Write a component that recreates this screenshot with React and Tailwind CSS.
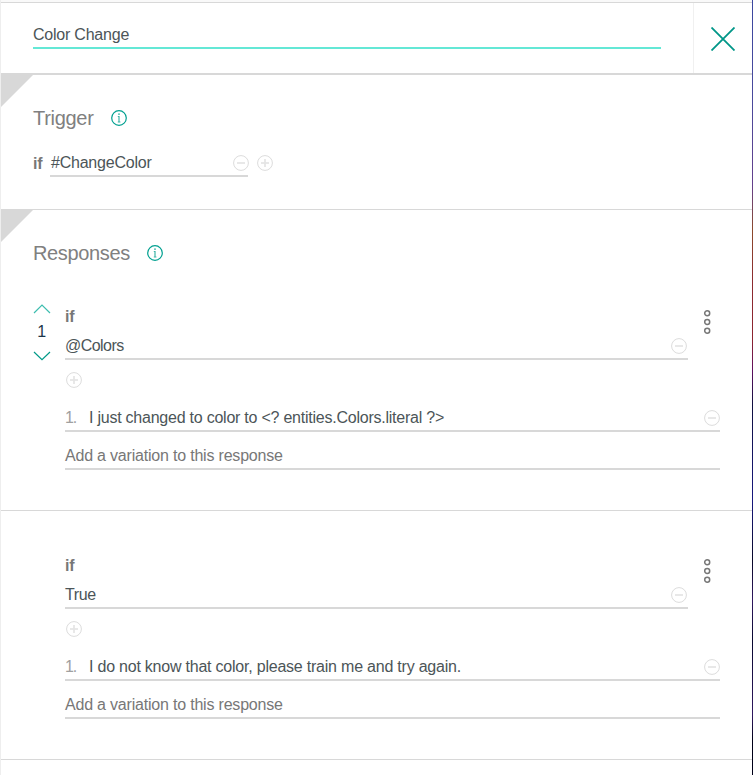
import React from 'react';

function CircleIcon({ plus = false }) {
  return (
    <svg width="16" height="16" viewBox="0 0 16 16" fill="none" className="block shrink-0">
      <circle cx="8" cy="8" r="7.4" stroke="#dcdcdc" />
      <path d="M4 8h8" stroke="#e4e4e4" strokeWidth="1.7" />
      {plus && <path d="M8 4v8" stroke="#e4e4e4" strokeWidth="1.7" />}
    </svg>
  );
}

function InfoIcon() {
  return (
    <svg width="16" height="16" viewBox="0 0 16 16" fill="none" className="block shrink-0">
      <circle cx="8" cy="8" r="7.3" stroke="#00a090" strokeWidth="1.2" />
      <path d="M6.8 6.5H8V12M6.8 12h2.6" stroke="#3fb5a8" strokeWidth="1.2" />
      <rect x="7.2" y="3.4" width="1.6" height="1.5" fill="#3fb5a8" />
    </svg>
  );
}

function MoreIcon() {
  return (
    <svg width="8" height="26" viewBox="0 0 8 26" fill="none" stroke="#777" strokeWidth="1.5" className="block">
      <circle cx="4.2" cy="4.2" r="2.5" />
      <circle cx="4.2" cy="13" r="2.5" />
      <circle cx="4.2" cy="21.8" r="2.5" />
    </svg>
  );
}

function Chevron({ down = false }) {
  return (
    <svg width="18" height="10" viewBox="0 0 18 10" fill="none" className="block">
      <path
        d={down ? 'M1 1L9 8.7L17 1' : 'M1 9L9 1L17 9'}
        stroke={down ? '#009a88' : '#3dbdaf'}
        strokeWidth="1.2"
      />
    </svg>
  );
}

function Corner() {
  return (
    <svg width="33" height="33" viewBox="0 0 33 33" className="absolute left-0 -top-px block">
      <path d="M0 0H33L0 33Z" fill="#d8d8d8" />
    </svg>
  );
}

function Response({ condition, conditionClass, text, textClass, order }) {
  return (
    <div className="flex h-[206px] pl-8">
      <div className="flex w-8 shrink-0 flex-col pt-[1px]">
        {order && (
          <>
            <Chevron />
            <div className="h-[37px] w-[17px] pt-[8px] text-center leading-[20px] text-[#1d3649]">{order}</div>
            <Chevron down />
          </>
        )}
      </div>
      <div className="w-[655px]">
        <div className="flex h-[57px]">
          <div className="w-[623px] border-b-2 border-[#d8d8d8]">
            <div className="h-[29px] pt-[4px] font-bold leading-[20px] text-[#777]">if</div>
            <div className="flex justify-between leading-[20px]">
              <span className={`pt-[4px] ${conditionClass}`}>{condition}</span>
              <span className="pr-px pt-[6px]"><CircleIcon /></span>
            </div>
          </div>
          <div className="pl-[15px] pt-[6px]"><MoreIcon /></div>
        </div>
        <div className="h-[45px] pl-px pt-[12px]"><CircleIcon plus /></div>
        <div className="flex h-[27px] border-b-2 border-[#d8d8d8] leading-[20px]">
          <span className="w-6 pt-[3px] tracking-[-1.2px] text-[#a0a0a0]">1.</span>
          <span className={`flex-1 whitespace-nowrap pt-[3px] ${textClass}`}>{text}</span>
          <span className="pt-[5px]"><CircleIcon /></span>
        </div>
        <div className="h-[38px] border-b-2 border-[#d8d8d8] pt-[14px] leading-[20px] tracking-[-0.2px] text-[#777]">
          Add a variation to this response
        </div>
      </div>
    </div>
  );
}

export default function App() {
  return (
    <div className="flex h-[775px] w-[753px] overflow-hidden bg-white font-['Liberation_Sans',Arial,sans-serif] text-[16px] tracking-[-0.22px] text-[#4c5558]">
      <div className="w-px shrink-0 bg-[#eee]" />
      <main className="w-[751px] shrink-0">
        <div className="h-[3px] border-b border-[#d8d8d8] bg-[#f9f9f9]" />
        <header className="flex h-[72px] border-b-2 border-[#d8d8d8]">
          <div className="flex-1 pl-8">
            <div className="h-[46px] w-[628px] border-b-2 border-[#64e8d6] pt-[22px] leading-[20px]">Color Change</div>
          </div>
          <div className="flex w-[59px] justify-center border-l border-[#f0f0f0] pt-6">
            <svg width="24" height="24" viewBox="0 0 24 24" className="block">
              <path d="M0.5 0.5L23.5 23.5M23.5 0.5L0.5 23.5" stroke="#009688" strokeWidth="1.8" />
            </svg>
          </div>
        </header>

        <section className="relative h-[135px] border-b border-[#d8d8d8] pl-8">
          <Corner />
          <div className="flex h-[75px] gap-[17px] pt-[30px] text-[20px] leading-[26px] tracking-[-0.3px] text-[#808080]">
            <h2 className="w-[61px]">Trigger</h2>
            <span className="pt-[5px]"><InfoIcon /></span>
          </div>
          <div className="flex h-[27px]">
            <span className="w-[17px] pt-[4px] font-bold leading-[20px] text-[#777]">if</span>
            <div className="flex h-[27px] w-[198px] justify-between border-b-2 border-[#d8d8d8] leading-[20px]">
              <span className="pl-px pt-[3px]">#ChangeColor</span>
              <span className="-mr-px pt-[5px]"><CircleIcon /></span>
            </div>
            <span className="pl-[9px] pt-[5px]"><CircleIcon plus /></span>
          </div>
        </section>

        <section className="relative h-[301px] border-b border-[#d8d8d8]">
          <Corner />
          <div className="flex h-[93px] gap-4 pl-8 pt-[30px] text-[20px] leading-[26px] tracking-[-0.36px] text-[#808080]">
            <h2 className="w-[98px]">Responses</h2>
            <span className="pt-[5px]"><InfoIcon /></span>
          </div>
          <Response
            order="1"
            condition="@Colors"
            conditionClass="tracking-[-0.55px]"
            text="I just changed to color to <? entities.Colors.literal ?>"
            textClass="tracking-[-0.235px]"
          />
        </section>

        <section className="h-[249px] border-b border-[#d8d8d8] pt-[41px]">
          <Response
            condition="True"
            conditionClass="tracking-[-0.4px]"
            text="I do not know that color, please train me and try again."
            textClass="tracking-[-0.22px]"
          />
        </section>
      </main>
      <div className="w-px shrink-0 bg-[linear-gradient(#3c48a0_0px,#4a4a9c_100px,#64408c_185px,#8c4a2c_230px,#8c2c30_280px,#8c2430_340px,#601060_370px,#101040_405px,#181880_500px,#080828_560px,#301860_600px,#080830_640px,#301860_715px,#000018_740px)]" />
    </div>
  );
}
